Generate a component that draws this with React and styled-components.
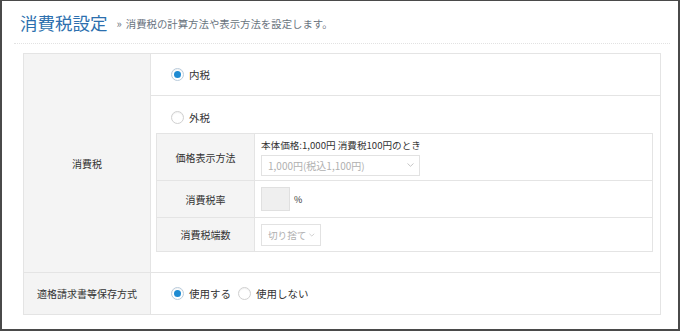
import React from "react";
import styled, { createGlobalStyle } from "styled-components";

const GlobalStyle = createGlobalStyle`
	html, body {
		margin: 0;
		padding: 0;
		background: #fff;
	}
	body {
		font-family: "Noto Sans CJK JP", "Noto Sans", sans-serif;
		color: #333;
	}
`;

const Frame = styled.div`
	box-sizing: border-box;
	width: 680px;
	height: 331px;
	border: 2px solid #4a4a4a;
	border-top-width: 1px;
	background: #fff;
	overflow: hidden;
`;

const Header = styled.header`
	display: flex;
	align-items: center;
	height: 42px;
	margin: 0 8px 0 12px;
	padding-left: 6px;
	border-bottom: 1px dotted #e2e2e2;
`;

const Title = styled.h1`
	margin: 0;
	font-size: 17.5px;
	font-weight: 400;
	color: #2c6fae;
`;

const Lead = styled.p`
	margin: 2px 0 0 9px;
	font-size: 10.4px;
	color: #6a7480;

	span {
		margin-right: 4px;
		font-size: 11px;
	}
`;

const Table = styled.table`
	table-layout: fixed;
	border-collapse: collapse;
	margin: 9px 0 0 21px;
	width: 638px;
	font-size: 10px;
	border: 1px solid #e4e4e4;

	th {
		background: #f4f4f4;
		font-weight: 400;
		text-align: center;
		border: 1px solid #e4e4e4;
		padding: 0;
		white-space: nowrap;
	}
	td {
		border: 1px solid #e4e4e4;
		padding: 0;
		vertical-align: top;
	}
`;

const LabelCell = styled.th`
	width: ${p => p.$w}px;
`;

const OptionLine = styled.div`
	box-sizing: border-box;
	display: flex;
	align-items: center;
	gap: 5px;
	height: ${p => p.$h}px;
	padding: ${p => p.$pt || 0}px 0 0 ${p => p.$pl ?? 20}px;
	font-size: 10.5px;
`;

const Radio = styled.span`
	box-sizing: border-box;
	display: inline-flex;
	align-items: center;
	justify-content: center;
	width: 13px;
	height: 13px;
	border-radius: 50%;
	border: 1px solid ${p => (p.$on ? "#b9cbdb" : "#d0d0d0")};
	background: #fff;
	box-shadow: inset 0 1px 1px rgba(0, 0, 0, 0.06);
	margin-left: ${p => p.$ml || 0}px;

	&::after {
		content: "";
		display: ${p => (p.$on ? "block" : "none")};
		width: 7px;
		height: 7px;
		border-radius: 50%;
		background: #1f8bd2;
	}
`;

const OuterCell = styled.td`
	padding: 0 7px 20px 5px !important;
`;

const SubTable = styled.table`
	table-layout: fixed;
	border-collapse: collapse;
	width: 497px;
	font-size: 10px;
`;

const SubRow = styled.tr`
	height: ${p => p.$h}px;
`;

const ValueCell = styled.td`
	padding: 0 0 0 6px !important;
	vertical-align: middle !important;
	white-space: nowrap;
`;

const Note = styled.div`
	margin: 0 0 3px;
	line-height: 13px;
	font-size: 9.6px;
	color: #333;
`;

const FakeSelect = styled.div`
	box-sizing: border-box;
	display: flex;
	align-items: center;
	justify-content: space-between;
	gap: 3px;
	width: ${p => p.$w}px;
	height: ${p => p.$h}px;
	padding: 0 5px 0 6px;
	border: 1px solid #e2e2e2;
	background: #fff;
	color: #b0b0b0;
	font-size: ${p => p.$fs || 10}px;
	white-space: nowrap;
`;

const RateWrap = styled.div`
	display: flex;
	align-items: center;
	gap: 4px;
	font-size: 9px;
`;

const RateBox = styled.div`
	box-sizing: border-box;
	width: 29px;
	height: 24px;
	background: #efefef;
	border: 1px solid #e0e0e0;
`;

const Chevron = () => (
	<svg width="7" height="4" viewBox="0 0 7 4">
		<path d="M0.5 0.5 L3.5 3.3 L6.5 0.5" fill="none" stroke="#b8b8b8" strokeWidth="0.8" />
	</svg>
);

const App = () => (
	<>
		<GlobalStyle />
		<Frame>
			<Header>
				<Title>消費税設定</Title>
				<Lead><span>»</span>消費税の計算方法や表示方法を設定します。</Lead>
			</Header>
			<Table>
				<tbody>
					<tr>
						<LabelCell $w={126} rowSpan={2}>消費税</LabelCell>
						<td>
							<OptionLine $h={41}>
								<Radio $on />内税
							</OptionLine>
						</td>
					</tr>
					<tr>
						<OuterCell>
							<OptionLine $h={37} $pt={6} $pl={15}>
								<Radio />外税
							</OptionLine>
							<SubTable>
								<tbody>
									<SubRow $h={47}>
										<LabelCell $w={97}>価格表示方法</LabelCell>
										<ValueCell>
											<Note>本体価格:1,000円 消費税100円のとき</Note>
											<FakeSelect $w={159} $h={21}>
												1,000円(税込1,100円)
												<Chevron />
											</FakeSelect>
										</ValueCell>
									</SubRow>
									<SubRow $h={37}>
										<LabelCell $w={97}>消費税率</LabelCell>
										<ValueCell>
											<RateWrap>
												<RateBox />%
											</RateWrap>
										</ValueCell>
									</SubRow>
									<SubRow $h={34}>
										<LabelCell $w={97}>消費税端数</LabelCell>
										<ValueCell>
											<FakeSelect $w={60} $h={22} $fs={9.6}>
												切り捨て
												<Chevron />
											</FakeSelect>
										</ValueCell>
									</SubRow>
								</tbody>
							</SubTable>
						</OuterCell>
					</tr>
					<tr>
						<LabelCell $w={126}>適格請求書等保存方式</LabelCell>
						<td>
							<OptionLine $h={41}>
								<Radio $on />使用する
								<Radio $ml={2} />使用しない
							</OptionLine>
						</td>
					</tr>
				</tbody>
			</Table>
		</Frame>
	</>
);

export default App;
